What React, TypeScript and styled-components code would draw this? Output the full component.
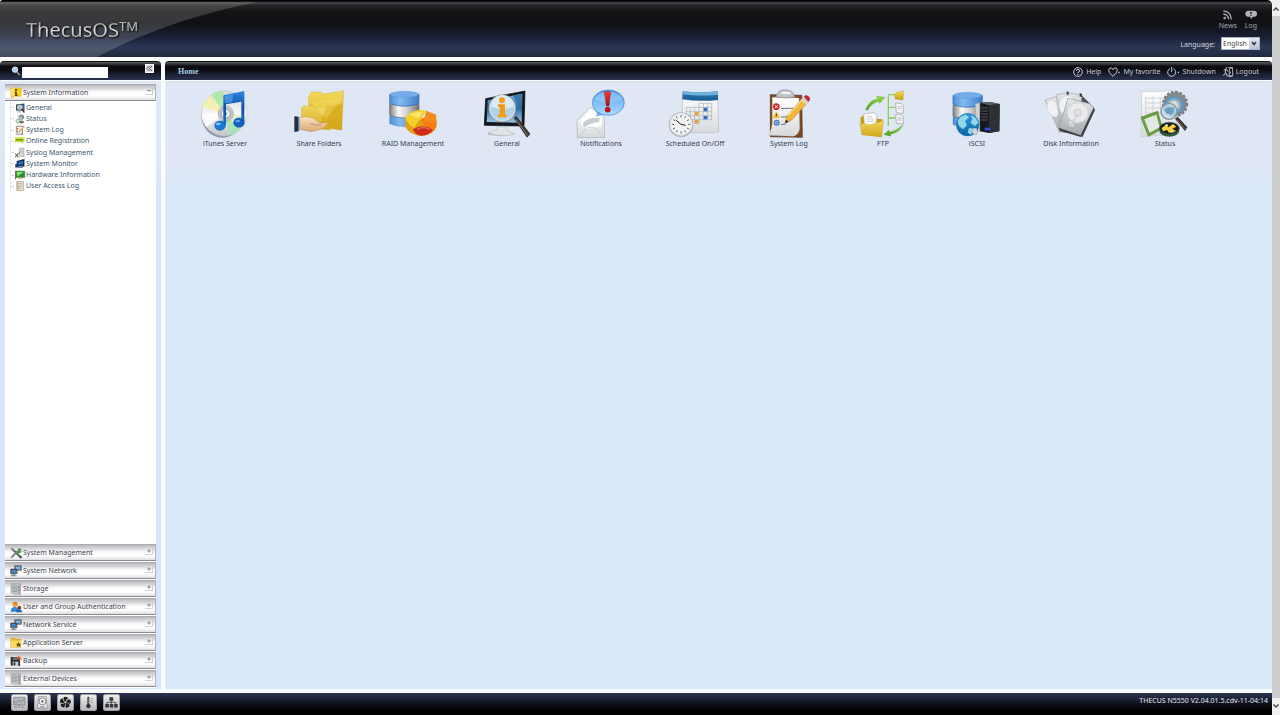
import React from "react";
import styled, { createGlobalStyle } from "styled-components";

const UI_FONT = '"Noto Sans", "Open Sans", sans-serif';

const GlobalStyle = createGlobalStyle`
  *, *::before, *::after { box-sizing: border-box; }
  body {
    margin: 0;
    background: #fbfcfe;
    font-family: ${UI_FONT};
    font-size: 7px;
    line-height: 10px;
    color: #3c4450;
  }
  button, input, select { font: inherit; color: inherit; }
  a { color: inherit; text-decoration: none; }
  ul { list-style: none; margin: 0; padding: 0; }
  h1, h2 { margin: 0; font-weight: normal; font-size: inherit; }
  svg { display: block; overflow: visible; }
`;

/* ---------- page frame ---------- */

const Page = styled.div`
  display: grid;
  grid-template-columns: minmax(0, 1fr) 8px;
  min-height: 100vh;
`;

const Desktop = styled.div`
  display: flex;
  flex-direction: column;
  min-width: 0;
`;

const ScrollTrack = styled.div`
  display: flex;
  flex-direction: column;
  align-items: center;
  justify-content: space-between;
  background: #f0f0f0;
  padding: 7px 0;
`;

const ScrollThumb = styled.div`
  flex: 1;
  align-self: stretch;
  margin: 5px 0 6px;
  background: #cdcdcd;
`;

const Columns = styled.div`
  display: grid;
  grid-template-columns: 161px minmax(0, 1fr);
  gap: 4px;
  flex: 1;
  padding: 4px 0;
`;

const Panel = styled.section`
  display: flex;
  flex-direction: column;
  min-width: 0;
`;

const PanelBar = styled.div`
  display: flex;
  align-items: center;
  height: 19px;
  border-radius: 4px 4px 0 0;
  border-top: 1px solid #111;
  background: linear-gradient(#5c5c60 0, #38383c 2px, #0c0c10 4px, #0b0c12 8px, #1c2236 13px, #2b3350 18px);
  margin-bottom: 1px;
`;

/* ---------- top header ---------- */

const Header = styled.header`
  position: relative;
  display: flex;
  justify-content: space-between;
  height: 57px;
  border-top: 1px solid #000;
  border-radius: 3px 5px 0 0;
  overflow: hidden;
  background: linear-gradient(#060606 0, #4a4a4e 2px, #26272a 4px, #141416 10px, #0f1014 22px, #192034 36px, #2b3754 46px, #232a3e 56px);
`;

const Swoosh = styled.svg`
  position: absolute;
  left: 0;
  top: 0;
`;

const Logo = styled.h1`
  position: relative;
  display: flex;
  align-items: flex-start;
  padding: 14px 0 0 26px;
  font-family: "Noto Sans", "Open Sans", sans-serif;
  font-size: 20px;
  line-height: 30px;
  filter: drop-shadow(1px 1px 1px #000);

  span, sup {
    background: linear-gradient(#8d8d8d 20%, #dedede 50%, #a4a4a4 80%);
    -webkit-background-clip: text;
    background-clip: text;
    color: transparent;
  }
  sup {
    font-size: 13px;
    line-height: 22px;
  }
`;

const HeaderTools = styled.div`
  display: flex;
  flex-direction: column;
  align-items: flex-end;
  padding: 9px 12px 0 0;
`;

const Shortcuts = styled.nav`
  display: flex;
  gap: 8px;
  padding-right: 3px;
`;

const Shortcut = styled.a`
  display: flex;
  flex-direction: column;
  align-items: center;
  gap: 1px;
  color: #a4a5aa;
`;

const LanguageRow = styled.div`
  display: flex;
  align-items: center;
  gap: 6px;
  margin-top: 6px;
  color: #d4d6dc;

  label { padding-top: 2px; }
`;

const SelectBox = styled.div`
  display: grid;
  grid-template-columns: 27px 10px;
  height: 13px;
  border: 1px solid #a9b3c4;
  background: #fff;

  select {
    grid-area: 1 / 1 / 2 / 3;
    appearance: none;
    border: 0;
    padding: 0 0 0 1px;
    background: transparent;
    color: #444;
    line-height: 11px;
  }
  svg {
    grid-area: 1 / 2 / 2 / 3;
    pointer-events: none;
    background: linear-gradient(#e4e9f1, #b7c1d2);
  }
`;

/* ---------- sidebar ---------- */

const SearchBar = styled(PanelBar)`
  padding: 0 7px 0 11px;
  gap: 1px;

  input {
    width: 86px;
    height: 11px;
    margin-top: 3px;
    padding: 0 2px;
    border: 0;
    background: #fff;
  }
`;

const CollapseButton = styled.button`
  display: grid;
  place-items: center;
  width: 9px;
  height: 9px;
  margin: 0 0 5px auto;
  padding: 0;
  border: 1px solid #fff;
  background: #dcdcdc;
`;

const SidebarBody = styled.div`
  display: flex;
  flex: 1;
  flex-direction: column;
  padding: 3px 5px 1px;
  background: linear-gradient(#e0e8f6 0, #dfe7f5 100px, #d6e5fa 110px);
`;

const Accordion = styled.div`
  display: flex;
  flex: 1;
  flex-direction: column;
  background: #fff;
`;

const SectionButton = styled.button`
  display: flex;
  align-items: center;
  flex: none;
  gap: 1px;
  width: 100%;
  height: 17px;
  margin-bottom: 1px;
  padding: 1px 2px 0 5px;
  border: 0;
  border-right: 1px solid #b0b0b4;
  border-bottom: 1px solid #8c8c90;
  background: linear-gradient(#a6a6aa 0, #c3c3c7 2px, #dcdcdf 5px, #fbfbfb 8px, #fff 12px, #dedee2 16px);
  text-align: left;
  white-space: nowrap;
`;

const ToggleMark = styled.span`
  display: grid;
  place-items: center;
  width: 8px;
  height: 7px;
  margin: 0 0 3px auto;
  border-right: 1px solid #cfcfcf;
  border-bottom: 1px solid #d4d4d4;
`;

const Tree = styled.div`
  display: flex;
  flex: 1;
  flex-direction: column;
`;

const TreeList = styled.ul`
  display: flex;
  flex-direction: column;
  justify-content: space-between;
  height: 90px;
  margin-left: 5px;
  border-left: 1px dotted #d4d4d4;
`;

const TreeLink = styled.a`
  display: flex;
  align-items: center;
  gap: 2px;
  height: 11px;
  color: #40566e;

  &::before {
    content: "";
    width: 2px;
    border-top: 1px dotted #d4d4d4;
  }
  svg { margin-right: -1px; }
`;

/* ---------- main area ---------- */

const MainBar = styled(PanelBar)`
  justify-content: space-between;
  padding: 2px 13px 0;
`;

const Title = styled.h2`
  && { font-weight: bold; }
  font-family: "Liberation Serif", serif;
  font-size: 8px;
  color: #a9d3e4;
`;

const Toolbar = styled.nav`
  display: flex;
  gap: 7px;
`;

const ToolButton = styled.button`
  display: flex;
  align-items: center;
  gap: 3px;
  padding: 0;
  border: 0;
  background: none;
  color: #c9ccd4;
`;

const Workspace = styled.main`
  flex: 1;
  padding: 8px 12px;
  border-top: 1px solid #d9dce4;
  border-left: 1px solid #e6edf8;
  border-right: 4px solid #dce8f8;
  background: linear-gradient(#dfe7f5 0, #dfe7f5 88px, #d8e7fa 104px);
`;

const AppGrid = styled.ul`
  display: flex;
  flex-wrap: wrap;
  row-gap: 12px;
`;

const AppLink = styled.a`
  display: flex;
  flex-direction: column;
  align-items: center;
  gap: 1px;
  width: 94px;
  color: #33404f;
  text-align: center;
`;

/* ---------- footer ---------- */

const Footer = styled.footer`
  display: flex;
  align-items: flex-start;
  justify-content: space-between;
  height: 22px;
  padding: 1px 4px 0 11px;
  background: linear-gradient(#2b3450 0, #1c2236 6px, #0a0b12 12px, #000 18px);
  color: #e6e8ee;
`;

const MonitorButtons = styled.div`
  display: flex;
  gap: 6px;
`;

const MonitorButton = styled.button`
  display: grid;
  place-items: center;
  width: 17px;
  height: 17px;
  padding: 0;
  border: 1px solid #a0a0a4;
  border-radius: 2px;
  background: linear-gradient(#efeff0, #b9b9bd);
`;

const Version = styled.span`
  padding-top: 2px;
`;

/* ---------- shared gradients ---------- */

const DefsSvg = styled.svg`
  position: absolute;
`;

function SharedDefs() {
  const lin = (id: string, stops: [string, string][], horizontal = false) => (
    <linearGradient id={id} x1="0" y1="0" x2={horizontal ? "1" : "0"} y2={horizontal ? "0" : "1"}>
      {stops.map(([o, c]) => (
        <stop key={o} offset={o} stopColor={c} />
      ))}
    </linearGradient>
  );
  return (
    <DefsSvg width="0" height="0" aria-hidden="true">
      <defs>
        {lin("gold", [["0", "#f3dc5c"], ["0.5", "#e3bd2d"], ["1", "#c99a14"]])}
        {lin("goldLight", [["0", "#f0d65c"], ["1", "#d4a61e"]])}
        {lin("blueCyl", [["0", "#4f8fd6"], ["0.35", "#84baf2"], ["1", "#3f7cc6"]], true)}
        {lin("steelCyl", [["0", "#7d7d7d"], ["0.3", "#fafafa"], ["0.6", "#cfcfcf"], ["1", "#6f6f6f"]], true)}
        {lin("note", [["0", "#2f86dc"], ["0.5", "#0f4fae"], ["1", "#1b74d4"]])}
        {lin("disc", [["0", "#d2d6d8"], ["0.5", "#f6f6f6"], ["1", "#c2c6c8"]])}
        {lin("screen", [["0", "#7db4e0"], ["0.5", "#2c6ea8"], ["1", "#9cc8e8"]])}
        {lin("bubble", [["0", "#3f8ce8"], ["0.45", "#7cbcf6"], ["1", "#a8dcff"]])}
        {lin("red", [["0", "#f23b30"], ["1", "#b30d12"]])}
        {lin("paper", [["0", "#ffffff"], ["1", "#d6dadd"]])}
        {lin("calHead", [["0", "#2f7cb4"], ["1", "#175a90"]])}
        {lin("globe", [["0", "#2c9ad8"], ["1", "#0b63a8"]])}
        {lin("hand", [["0", "#fbe3c4"], ["1", "#dba877"]])}
        {lin("disk", [["0", "#e6e7e8"], ["1", "#a5a8ab"]])}
        {lin("green", [["0", "#9ad84a"], ["1", "#4a9c16"]])}
      </defs>
    </DefsSvg>
  );
}

/* ---------- large application icons ---------- */

const Cylinder = ({ x, y }: { x: number; y: number }) => (
  <g transform={`translate(${x} ${y})`}>
    <path d="M0 74 V98 Q44 116 88 98 V74Z" fill="url(#blueCyl)" stroke="#3a6fb0" />
    <path d="M0 40 V72 Q44 90 88 72 V40Z" fill="url(#steelCyl)" stroke="#66696c" strokeWidth="2" />
    <path d="M0 10 V37 Q44 55 88 37 V10Z" fill="url(#blueCyl)" stroke="#2f64a8" strokeWidth="2" />
    <ellipse cx="44" cy="10" rx="43" ry="9" fill="#74ace8" stroke="#4f8bd0" />
  </g>
);

const APP_ART: Record<string, { box: string; art: React.ReactNode }> = {
  itunes: {
    box: "64 24 144 144",
    art: (
      <g>
        <ellipse cx="128" cy="101" rx="63" ry="66" fill="#6e7478" opacity="0.7" />
        <circle cx="134" cy="94" r="68" fill="url(#disc)" stroke="#b9bec2" />
        <path d="M134 94 L95 38 A68 68 0 0 1 128 26Z" fill="#a4ec9c" opacity="0.85" />
        <path d="M134 94 L68 76 A68 68 0 0 1 92 41Z" fill="#f7f0a0" opacity="0.75" />
        <path d="M134 94 L182 142 A68 68 0 0 1 150 160Z" fill="#9ce8b0" opacity="0.8" />
        <path d="M134 94 L201 104 A68 68 0 0 1 184 140Z" fill="#d8e8b0" opacity="0.6" />
        <path d="M134 94 L66 96 A68 68 0 0 0 80 136Z" fill="#fff" opacity="0.8" />
        <circle cx="138" cy="95" r="23" fill="#c5c8ca" stroke="#a2a6a8" strokeWidth="2" />
        <circle cx="138" cy="95" r="14" fill="#eef1f2" stroke="#8d9294" strokeWidth="3" />
        <circle cx="138" cy="95" r="5" fill="#9aa" />
        <path d="M131 40 L194 27 V118 H185 V59 L139 67 V130 H131Z" fill="url(#note)" />
        <path d="M134 42 L160 37 L158 60 L136 64Z" fill="#5da6ec" opacity="0.6" />
        <ellipse cx="121" cy="131" rx="16" ry="14" fill="#1d78d8" stroke="#0d4696" strokeWidth="1.5" />
        <ellipse cx="178" cy="122" rx="16" ry="14" fill="#1260c0" stroke="#0d4696" strokeWidth="1.5" />
        <ellipse cx="116" cy="126" rx="7" ry="4" fill="#8cc6fa" />
        <ellipse cx="174" cy="117" rx="7" ry="4" fill="#5fa6ee" />
      </g>
    ),
  },
  share: {
    box: "346 24 144 144",
    art: (
      <g>
        <path d="M386 48 L394 30 H424 L430 37 L492 26 L486 144 L394 132Z" fill="url(#gold)" stroke="#c59a1c" />
        <path d="M365 78 L372 72 H400 L404 78 L440 76 L452 144 L400 138 L366 110Z" fill="url(#goldLight)" stroke="#cda42a" />
        <path d="M440 72 L488 66 L484 144 L420 134Z" fill="#d8ab1e" opacity="0.75" />
        <path d="M392 60 L488 48 L440 110Z" fill="#fbe98a" opacity="0.3" />
        <path d="M357 108 Q378 100 400 108 L420 122 Q434 124 446 120 Q440 134 424 142 Q398 152 380 146 L357 142Z" fill="url(#hand)" stroke="#a8764a" />
        <path d="M392 124 Q408 132 424 128" fill="none" stroke="#a8764a" strokeWidth="2" />
        <path d="M344 103 L357 104 V148 L344 150Z" fill="#22303e" />
        <path d="M357 105 H361 V146 H357Z" fill="#8fb0c8" />
      </g>
    ),
  },
  raid: {
    box: "628 24 144 144",
    art: (
      <g>
        <Cylinder x={630} y={27} />
        <path d="M677 108 V134 Q690 160 728 162 Q766 156 770 132 V108Z" fill="#e2a012" />
        <path d="M700 142 Q728 124 762 142 Q748 162 722 161 Q706 158 700 142Z" fill="#cf2a1c" />
        <path d="M724 112 L752 96 Q776 104 770 134 L762 146 Q742 130 732 130Z" fill="#f47a14" />
        <path d="M677 108 Q688 88 716 84 L740 86 L724 112 Q712 120 704 138 Q684 128 677 108Z" fill="#f5cf2a" />
        <path d="M740 86 L770 98 L768 124 L732 116Z" fill="#f28c1e" />
        <path d="M690 98 Q704 88 730 90 L716 108Z" fill="#fbe46a" />
        <path d="M712 142 Q730 132 752 142" fill="none" stroke="#f08070" strokeWidth="3" />
      </g>
    ),
  },
  general: {
    box: "70 24 144 144",
    art: (
      <g>
        <ellipse cx="124" cy="155" rx="40" ry="7" fill="#b9bec4" />
        <path d="M84 152 L112 144 V134 H142 V146 L166 156 Q120 166 84 152Z" fill="#e2e5e8" stroke="#9da3a8" />
        <path d="M78 50 L196 27 L193 132 L74 130Z" fill="#15181c" stroke="#000" strokeWidth="2" />
        <path d="M84 55 L188 35 L186 122 L81 120Z" fill="url(#screen)" />
        <path d="M160 40 L188 35 L186 90Z" fill="#2a6498" opacity="0.7" />
        <path d="M162 108 L170 101 L212 156 L202 167Z" fill="#3d3632" />
        <path d="M168 112 L204 160" stroke="#8a8078" strokeWidth="3" />
        <circle cx="128" cy="79" r="38" fill="#bcd8ee" fillOpacity="0.92" stroke="#d9dde0" strokeWidth="5" />
        <circle cx="128" cy="79" r="41" fill="none" stroke="#6d7478" strokeWidth="1.5" />
        <path d="M94 74 A34 34 0 0 1 162 74 Q128 88 94 74Z" fill="#e9f4fc" opacity="0.7" />
        <circle cx="127" cy="55" r="9" fill="#f39c12" />
        <path d="M115 67 H136 V98 H141 V106 H114 V98 H120 V75 H115Z" fill="#f39c12" />
      </g>
    ),
  },
  notify: {
    box: "352 24 144 144",
    art: (
      <g>
        <path d="M352 116 L392 76 L434 106 V166 L353 167Z" fill="url(#paper)" stroke="#a9adb0" strokeWidth="2" />
        <path d="M364 112 L394 90 L426 106 L424 132 L384 140 L364 130Z" fill="#fff" />
        <path d="M368 128 Q380 104 420 108 L418 120 Q388 124 376 136Z" fill="#c9ced2" />
        <path d="M353 167 L384 136 H404 L434 166" fill="none" stroke="#bdc1c4" strokeWidth="2" />
        <path d="M404 84 Q418 94 408 104 Q424 102 434 94Z" fill="#6fb0f0" />
        <ellipse cx="446" cy="62" rx="48" ry="38" fill="url(#bubble)" stroke="#4284d0" strokeWidth="2" />
        <path d="M404 52 Q414 30 446 28 Q478 30 488 52 Q446 68 404 52Z" fill="#a9d4fb" opacity="0.55" />
        <path d="M434 30 Q444 26 453 30 L448 72 H440Z" fill="url(#red)" stroke="#8e0a0e" />
        <circle cx="444" cy="83" r="8" fill="#c81418" stroke="#8e0a0e" />
      </g>
    ),
  },
  schedule: {
    box: "634 24 144 144",
    art: (
      <g>
        <path d="M668 34 H774 L777 150 Q730 156 668 148Z" fill="url(#paper)" stroke="#b5babd" strokeWidth="2" />
        <path d="M669 28 Q720 34 775 28 V54 Q720 60 668 52Z" fill="url(#calHead)" />
        <path d="M669 28 Q720 34 775 28 V38 Q720 44 668 37Z" fill="#6fb2dc" />
        <g fill="none" stroke="#a9afb4" strokeWidth="2">
          <path d="M718 64 H756 M680 76 H756 M680 89 H756 M680 101 H756 M690 113 H756 M704 125 H718" />
          <path d="M680 76 V101 M692 76 V113 M705 76 V125 M718 64 V125 M731 64 V113 M744 64 V113 M756 64 V113" />
        </g>
        <path d="M732 77 H743 V88 H732Z M732 102 H743 V112 H732Z" fill="#2a6fc0" />
        <path d="M706 90 H717 V100 H706Z M706 114 H717 V124 H706Z" fill="#f0a030" />
        <circle cx="664" cy="128" r="37" fill="#b0b4b8" />
        <circle cx="664" cy="127" r="33" fill="#f2f3f4" stroke="#dfe2e4" strokeWidth="3" />
        <g stroke="#666" strokeWidth="3">
          <path d="M664 99 V106 M664 148 V155 M636 127 H643 M685 127 H692 M650 103 L653 109 M678 103 L675 109 M650 151 L653 145 M678 151 L675 145 M640 113 L646 116 M688 113 L682 116 M640 141 L646 138 M688 141 L682 138" />
        </g>
        <path d="M648 114 L664 127 L678 130" fill="none" stroke="#222" strokeWidth="3" />
      </g>
    ),
  },
  syslog: {
    box: "76 24 144 144",
    art: (
      <g>
        <path d="M92 38 L186 40 L188 166 L92 164Z" fill="#7c4a22" stroke="#4f2c12" strokeWidth="2" />
        <path d="M98 46 L178 48 L180 140 Q176 160 160 163 L86 160 Q98 140 98 120Z" fill="url(#paper)" stroke="#bcbcbc" />
        <path d="M118 28 Q138 18 158 30 L166 44 Q138 52 108 44Z" fill="#c3c6c9" stroke="#868a8e" strokeWidth="2" />
        <path d="M126 30 H152 V36 H126Z" fill="#f2f3f4" />
        <circle cx="110" cy="74" r="10" fill="#d22a26" />
        <path d="M106 70 L114 78 M114 70 L106 78" stroke="#fff" strokeWidth="3" />
        <path d="M110 89 L120 107 H101Z" fill="#f5c416" stroke="#d09a10" />
        <path d="M110 95 V103" stroke="#222" strokeWidth="2.5" />
        <circle cx="111" cy="122" r="9" fill="#4d7eb8" />
        <circle cx="111" cy="122" r="4" fill="none" stroke="#cfe0f4" strokeWidth="2" />
        <path d="M124 79 H168 M124 105 H146 M124 127 H138" stroke="#70757a" strokeWidth="3" />
        <path d="M190 46 L207 58 L156 114 L136 124 L142 102Z" fill="#f3b53a" stroke="#c07e16" strokeWidth="1.5" />
        <path d="M184 53 L200 66 M146 100 L190 50" stroke="#fbdc90" strokeWidth="4" />
        <path d="M192 44 L199 39 Q213 44 211 54 L206 60Z" fill="#c62839" />
        <path d="M186 51 L192 44 L206 59 L201 66Z" fill="#cfd2d6" />
        <path d="M136 124 L139 113 L147 119Z" fill="#222" />
      </g>
    ),
  },
  ftp: {
    box: "358 24 144 144",
    art: (
      <g>
        <path d="M446 38 V132 M446 38 H466 M446 76 H468 M446 108 H468" fill="none" stroke="#8ccf5a" strokeWidth="4" />
        <path d="M465 36 L472 30 H480 L484 27 H492 L490 54 L466 51Z" fill="url(#gold)" stroke="#b98e16" />
        <path d="M468 63 L486 65 L491 70 V94 L470 92Z M468 97 L486 99 L491 104 V126 L470 124Z" fill="#f2f3f4" stroke="#9b9ea2" strokeWidth="2" />
        <path d="M474 74 H486 M474 80 H486 M474 108 H486 M474 114 H486" stroke="#a4a8ac" strokeWidth="2" />
        <path d="M362 108 L368 102 H384 L388 108 L428 112 L424 164 L366 158Z" fill="#c79a16" />
        <path d="M372 96 L402 92 L412 102 L408 132 L374 130Z" fill="#fbfbfb" stroke="#a9acb0" strokeWidth="2" />
        <path d="M380 104 H398 M380 111 H402 M380 118 H402" stroke="#b0b4b8" strokeWidth="2" />
        <path d="M360 124 L392 128 L432 116 L426 165 L368 158Z" fill="url(#goldLight)" stroke="#c69a1c" />
        <path d="M378 84 Q388 54 414 50 L411 43 L436 46 L420 64 L417 58 Q394 64 384 84Z" fill="url(#green)" stroke="#4e9a1c" />
        <path d="M490 128 Q480 152 452 156 L454 162 L433 158 L447 144 L449 150 Q472 146 490 128Z" fill="url(#green)" stroke="#4e9a1c" />
      </g>
    ),
  },
  iscsi: {
    box: "640 24 144 144",
    art: (
      <g>
        <Cylinder x={640} y={30} />
        <path d="M722 62 L752 60 L780 66 L779 148 L748 153 L720 148Z" fill="#17191c" />
        <path d="M722 62 L752 60 L780 66 L748 70Z" fill="#5d6166" />
        <path d="M748 70 L780 66 L779 148 L748 153Z" fill="#2d3034" />
        <path d="M724 78 H745 M724 87 H745 M724 96 H745 M724 105 H745 M724 114 H745" stroke="#55595e" strokeWidth="3" />
        <path d="M735 137 H752 V145 H735Z" fill="#3848e0" />
        <path d="M707 66 L720 62 V148 L709 150Z" fill="#cfd2d5" stroke="#8e9296" />
        <circle cx="684" cy="128" r="34" fill="url(#globe)" stroke="#0f5c96" />
        <path d="M654 118 Q662 100 678 98 L688 106 L676 118 L682 130 L670 142 L658 132Z M694 100 Q710 106 716 122 L706 132 L692 122 L698 112Z M688 138 L706 140 L694 158 L684 152Z" fill="#9ce0ee" opacity="0.9" />
        <path d="M698 144 Q706 134 712 140 V158 Q702 160 698 152Z" fill="#d3d6d8" stroke="#888" />
      </g>
    ),
  },
  disks: {
    box: "142 24 144 144",
    art: (
      <g>
        <path d="M182 150 L250 158 L284 78 L246 40Z" fill="#4d5154" />
        <path d="M136 54 L168 44 L204 140 L180 152Z" fill="url(#disk)" stroke="#a3a7aa" strokeWidth="2" />
        <ellipse cx="160" cy="80" rx="16" ry="26" transform="rotate(-22 160 80)" fill="#f0f1f2" stroke="#c3c6c8" />
        <path d="M170 38 L204 32 L246 40 L240 130 L184 148Z" fill="url(#disk)" stroke="#a3a7aa" strokeWidth="2" />
        <ellipse cx="204" cy="70" rx="27" ry="30" fill="#f0f1f2" stroke="#c3c6c8" strokeWidth="2" />
        <path d="M205 48 L272 66 L282 78 L244 160 L178 138Z" fill="url(#disk)" stroke="#94989b" strokeWidth="2" />
        <path d="M282 78 L286 84 L248 166 L243 160Z M178 138 L243 160 L246 166 L180 146Z" fill="#3e4144" />
        <ellipse cx="234" cy="92" rx="32" ry="30" fill="#e9eaeb" stroke="#cfd2d4" strokeWidth="3" />
        <circle cx="234" cy="92" r="11" fill="#dfe1e3" stroke="#c0c3c6" strokeWidth="2" />
        <path d="M206 118 Q214 112 224 120 L220 136 Q206 134 206 118Z" fill="#dadcde" stroke="#b4b7ba" />
        <path d="M214 128 L236 96" stroke="#bfc2c4" strokeWidth="3" />
        <path d="M201 28 L207 30 V38 H201Z M240 32 L247 36 V44 H240Z" fill="#3e4144" />
      </g>
    ),
  },
  status: {
    box: "424 24 144 144",
    art: (
      <g>
        <path d="M426 29 L530 27 V156 L424 164Z" fill="url(#paper)" stroke="#c4c8cb" strokeWidth="2" />
        <path d="M438 48 H500 M438 63 H500 M438 78 H500 M438 93 H500 M438 44 V96 M460 44 V96 M482 44 V96" stroke="#c2c6ca" strokeWidth="2" />
        <circle cx="526" cy="66" r="35" fill="#83898e" />
        <circle cx="526" cy="66" r="36" fill="none" stroke="#777d82" strokeWidth="7" strokeDasharray="8 5" />
        <circle cx="523" cy="70" r="23" fill="#a9afb4" stroke="#4ba0e0" strokeWidth="6" />
        <circle cx="523" cy="70" r="13" fill="#d8dcdf" />
        <circle cx="508" cy="88" r="24" fill="#b9d8ee" fillOpacity="0.75" stroke="#8c9398" strokeWidth="4" />
        <path d="M494 86 Q504 70 526 78 L518 96 Q504 100 494 86Z" fill="#5d93bc" opacity="0.8" />
        <path d="M526 110 L534 104 L563 136 L556 147Z" fill="#3c3230" />
        <path d="M532 113 L556 140" stroke="#8d6f66" strokeWidth="3" />
        <path d="M424 106 L474 88 L488 140 L446 163Z" fill="#6fa044" stroke="#4a7a28" strokeWidth="2" />
        <path d="M434 112 L470 98 L480 136 L450 152Z" fill="#e3e8e0" />
        <ellipse cx="509" cy="146" rx="30" ry="18" fill="#2e5a44" />
        <ellipse cx="509" cy="139" rx="30" ry="18" fill="#1d1d1a" stroke="#456b58" strokeWidth="2" />
        <path d="M486 138 L500 128 L506 136 L520 126 L530 134 L518 140 L530 148 L508 152 L502 144 L490 148Z" fill="#f4d23a" />
        <path d="M494 130 L502 126 L506 132 Z M516 146 L524 150 L514 152Z" fill="#fff" />
      </g>
    ),
  },
};

function AppIcon({ name, size = 48 }: { name: string; size?: number }) {
  const { box, art } = APP_ART[name];
  return (
    <svg width={size} height={size} viewBox={box} aria-hidden="true">
      {art}
    </svg>
  );
}

/* ---------- small sidebar icons, on a 36-unit grid ---------- */

const NetworkArt = (
  <g>
    <path d="M14 2 H34 V16 H14Z" fill="#5c6f80" stroke="#39444e" strokeWidth="1.5" />
    <path d="M17 5 H31 V13 H17Z" fill="#7fb4dc" />
    <path d="M2 12 H20 V26 H2Z" fill="#44525e" stroke="#2c353d" strokeWidth="1.5" />
    <path d="M5 15 H17 V23 H5Z" fill="#3f8ad0" />
    <path d="M6 26 H16 V31 H6Z M2 31 H20 V34 H2Z M24 17 V26 H20" fill="#8a959e" />
  </g>
);

const StorageArt = (
  <g>
    <path d="M3 2 H31 V11 H3Z M3 12 H31 V21 H3Z M3 22 H31 V31 H3Z" fill="#d4d6d8" stroke="#85898d" strokeWidth="1.5" />
    <path d="M6 6 H22 M6 16 H22 M6 26 H22" stroke="#8b8f93" strokeWidth="2.5" />
    <path d="M26 4 V34 M30 4 V34" stroke="#777b7f" strokeWidth="1.5" />
    <path d="M12 31 V35 H34" fill="none" stroke="#a0a4a8" strokeWidth="2" />
  </g>
);

const SMALL_ART: Record<string, React.ReactNode> = {
  info: (
    <g>
      <path d="M3 3 H33 V28 H12 L4 34 L5 28 H3Z" fill="#f8cf20" stroke="#d7a30c" strokeWidth="1.5" />
      <path d="M4 4 H14 V27 H4Z" fill="#fbe468" />
      <circle cx="18" cy="9" r="3" fill="#3a2c00" />
      <path d="M14 14 H20 V23 H23 V26 H14 V23 H16 V17 H14Z" fill="#3a2c00" />
    </g>
  ),
  tools: (
    <g>
      <path d="M5 4 L31 30" stroke="#5c6266" strokeWidth="6" />
      <path d="M4 32 L22 13" stroke="#7b8185" strokeWidth="6" />
      <path d="M22 14 L30 3 L34 8Z" fill="#4d5357" />
      <path d="M20 15 L26 4 L30 6 L27 10 L31 13 L34 9 L35 15 L27 20Z" fill="#4aa04c" />
      <path d="M2 6 L8 1 L12 8 L6 12Z" fill="#8e9498" />
      <path d="M28 30 L33 25 L36 31 L32 35Z" fill="#3e4448" />
    </g>
  ),
  network: NetworkArt,
  storage: StorageArt,
  users: (
    <g>
      <circle cx="15" cy="10" r="8" fill="#f2a43c" />
      <path d="M10 6 Q16 0 22 7 L23 14 Q20 8 10 9Z" fill="#e07a18" />
      <path d="M2 32 Q2 18 14 18 Q26 18 27 32Z" fill="#2f86dc" />
      <circle cx="28" cy="20" r="6" fill="#6b4a30" />
      <path d="M18 34 Q20 25 28 25 Q36 26 37 34Z" fill="#1d62b4" />
    </g>
  ),
  appserver: (
    <g>
      <path d="M2 6 L6 3 H15 L18 6 H32 V31 H2Z" fill="#e6b828" stroke="#c2941a" />
      <path d="M2 11 H34 L31 31 H2Z" fill="#f9db60" />
      <path d="M26 14 L28 20 L35 20 L30 24 L32 31 L26 27 L20 31 L22 24 L17 20 H24Z" fill="#6b4a12" />
    </g>
  ),
  backup: (
    <g>
      <path d="M2 6 H30 V33 H6 L2 29Z" fill="#2c2f33" />
      <path d="M8 20 H25 V33 H8Z" fill="#c9ccd0" />
      <path d="M11 22 H16 V31 H11Z" fill="#2c2f33" />
      <path d="M8 7 H23 V15 H8Z" fill="#6c7176" />
      <path d="M20 8 L28 1 V5 Q36 6 34 18 Q32 11 28 11 V15Z" fill="#e8602c" />
    </g>
  ),
  general: (
    <g>
      <path d="M4 5 L34 2 V28 L4 27Z" fill="#1f3550" />
      <path d="M7 8 L31 5 V24 L7 24Z" fill="#3f80bc" />
      <circle cx="17" cy="15" r="9" fill="#cfe2f2" stroke="#8d9ba8" strokeWidth="2" />
      <path d="M17 9 V21" stroke="#f09a18" strokeWidth="5" />
      <path d="M24 22 L34 34" stroke="#3d3632" strokeWidth="5" />
      <path d="M6 30 H22 V34 H6Z" fill="#b4bac0" />
    </g>
  ),
  status: (
    <g>
      <path d="M8 3 H26 V32 H8Z" fill="#e4e7e9" />
      <circle cx="24" cy="11" r="9" fill="#858b90" />
      <circle cx="22" cy="14" r="6" fill="#c2d4e2" stroke="#6a7076" strokeWidth="2" />
      <path d="M3 22 L14 18 L18 30 L8 34Z" fill="#dde3d8" stroke="#6f8c5c" strokeWidth="2" />
      <ellipse cx="24" cy="29" rx="8" ry="5" fill="#4c5046" />
      <path d="M20 29 H28" stroke="#d8c060" strokeWidth="3" />
    </g>
  ),
  registration: (
    <g>
      <path d="M0 4 H34 V22 H0Z" fill="#b4d82c" />
      <path d="M0 4 H34 V11 H0Z" fill="#d4ec54" />
      <path d="M5 13 H29" stroke="#4c6410" strokeWidth="4" strokeDasharray="3 1.5" />
      <path d="M22 22 H30 L28 30Z" fill="#c9ced0" />
    </g>
  ),
  scroll: (
    <g>
      <path d="M8 1 Q18 5 30 1 V33 Q20 36 8 34Z" fill="#efe6d6" stroke="#8a7c68" strokeWidth="2" />
      <path d="M13 9 H25 M13 15 H25 M13 21 H25 M13 27 H22" stroke="#a4947c" strokeWidth="2" />
      <path d="M5 1 H12 V34 H5Z" fill="#b7a58a" opacity="0.7" />
    </g>
  ),
  syslogm: (
    <g>
      <path d="M16 1 H32 V30 H16Z" fill="#e6e2dc" stroke="#8c8880" strokeWidth="2" />
      <path d="M20 9 H29 M20 14 H29 M20 19 H29" stroke="#a8a298" strokeWidth="2" />
      <path d="M1 20 L12 33 M12 20 L1 33" stroke="#5f7a68" strokeWidth="4" />
      <path d="M8 22 L20 14" stroke="#7c8c84" strokeWidth="3" />
    </g>
  ),
  monitor: (
    <g>
      <path d="M6 7 L34 0 V28 L6 25Z" fill="#0e2c58" />
      <path d="M10 11 L29 7 V20 L10 20Z" fill="#2a70c0" />
      <path d="M1 18 L14 16 V31 H1Z" fill="#1a3c6c" />
      <path d="M16 27 H28 V32 H12Z" fill="#707b86" />
    </g>
  ),
  hardware: (
    <g>
      <path d="M3 4 H35 V27 H3Z" fill="#2f8f34" stroke="#1d5c22" strokeWidth="1.5" />
      <path d="M6 7 H31 L8 23Z" fill="#8ce06c" />
      <path d="M0 3 H4 V33 H0Z" fill="#6c7074" />
      <path d="M10 27 H28 V31 H10Z" fill="#d0a62a" />
    </g>
  ),
};

function SmallIcon({ name, size }: { name: string; size: number }) {
  if (!SMALL_ART[name]) return <AppIcon name={name} size={size} />;
  return (
    <svg width={size} height={size} viewBox="0 0 36 36" aria-hidden="true">
      {SMALL_ART[name]}
    </svg>
  );
}

/* ---------- data ---------- */

const TREE = [
  ["general", "General"],
  ["status", "Status"],
  ["syslog", "System Log"],
  ["registration", "Online Registration"],
  ["syslogm", "Syslog Management"],
  ["monitor", "System Monitor"],
  ["hardware", "Hardware Information"],
  ["scroll", "User Access Log"],
];

const SECTIONS = [
  ["tools", "System Management"],
  ["network", "System Network"],
  ["storage", "Storage"],
  ["users", "User and Group Authentication"],
  ["network", "Network Service"],
  ["appserver", "Application Server"],
  ["backup", "Backup"],
  ["storage", "External Devices"],
];

const APPS = [
  ["itunes", "iTunes Server"],
  ["share", "Share Folders"],
  ["raid", "RAID Management"],
  ["general", "General"],
  ["notify", "Notifications"],
  ["schedule", "Scheduled On/Off"],
  ["syslog", "System Log"],
  ["ftp", "FTP"],
  ["iscsi", "iSCSI"],
  ["disks", "Disk Information"],
  ["status", "Status"],
];

const TOOLS: [string, React.ReactNode][] = [
  [
    "Help",
    <svg key="i" width="10" height="10" viewBox="0 0 30 30" fill="none" stroke="#c9ccd4" strokeWidth="3">
      <circle cx="15" cy="15" r="13" />
      <path d="M10 12 Q10 7 15 7 Q20 7 20 12 Q20 15 15 16 V19 M15 21 V24" />
    </svg>,
  ],
  [
    "My favorite",
    <svg key="i" width="12" height="10" viewBox="0 0 36 30" fill="none" stroke="#c9ccd4" strokeWidth="3">
      <path d="M15 28 Q0 16 2 9 Q4 2 10 3 Q14 4 15 8 Q16 4 21 3 Q27 2 28 9 Q29 16 15 28Z" />
      <path d="M33 14 V19" strokeWidth="4" />
    </svg>,
  ],
  [
    "Shutdown",
    <svg key="i" width="12" height="10" viewBox="0 0 36 30" fill="none" stroke="#c9ccd4" strokeWidth="3">
      <path d="M9 5 A12 12 0 1 0 19 5 M14 0 V15" />
      <path d="M34 14 V19" strokeWidth="4" />
    </svg>,
  ],
  [
    "Logout",
    <svg key="i" width="10" height="10" viewBox="0 0 30 30" fill="none" stroke="#c9ccd4" strokeWidth="2.5">
      <path d="M14 2 H29 V27 H14 M19 6 L28 2 M19 6 V29 L28 27" />
      <path d="M2 10 L8 7 L12 10 L16 13 M8 8 L7 17 L12 21 V28 M7 17 L5 23 L0 25" strokeWidth="3" />
      <circle cx="10" cy="3" r="2.5" fill="#c9ccd4" stroke="none" />
      <path d="M22 14 V19" />
    </svg>,
  ],
];

const MONITORS: [string, React.ReactNode][] = [
  [
    "System status",
    <g key="g">
      <path d="M2 4 H38 V28 H2Z" fill="#b4b6b8" stroke="#6d7073" strokeWidth="2" />
      <path d="M4 20 H12 L18 14 L24 18 L36 10" fill="none" stroke="#6d7073" strokeWidth="2" />
      <path d="M20 27 V36 M4 35 H14 M26 35 H36" stroke="#7d8083" strokeWidth="3" />
    </g>,
  ],
  [
    "Disk",
    <g key="g">
      <path d="M8 2 H32 L35 34 V38 H5 V34Z" fill="#f0f0f0" stroke="#77797c" strokeWidth="2" />
      <circle cx="20" cy="17" r="11" fill="none" stroke="#6d7073" strokeWidth="2.5" />
      <circle cx="20" cy="17" r="3.5" fill="#505356" />
      <path d="M12 34 H28" stroke="#808386" strokeWidth="3" />
    </g>,
  ],
  [
    "Fan",
    <g key="g">
      <circle cx="20" cy="20" r="18" fill="#3c3e41" opacity="0.25" />
      {[0, 72, 144, 216, 288].map((a) => (
        <path key={a} transform={`rotate(${a} 20 20)`} d="M20 18 Q12 12 16 3 Q28 1 28 9 Q22 10 20 18Z" fill="#1d1f21" />
      ))}
      <circle cx="20" cy="20" r="4" fill="#eee" stroke="#1d1f21" strokeWidth="2" />
    </g>,
  ],
  [
    "Temperature",
    <g key="g">
      <path d="M17 4 Q20 0 23 4 V25 Q28 28 27 33 Q24 39 20 39 Q15 38 13 33 Q13 28 17 25Z" fill="#2e3033" />
      <path d="M28 8 H34 M28 14 H32 M28 20 H34" stroke="#6d7073" strokeWidth="2" />
      <path d="M20 8 V24" stroke="#999" strokeWidth="2" />
    </g>,
  ],
  [
    "Network",
    <g key="g">
      <path d="M14 4 H26 V15 H14Z M1 25 H12 V36 H1Z M15 25 H26 V36 H15Z M29 25 H40 V36 H29Z" fill="#333538" />
      <path d="M20 15 V25 M6 25 V20 H34 V25" fill="none" stroke="#333538" strokeWidth="2.5" />
    </g>,
  ],
];

const Chevron = ({ up = false }: { up?: boolean }) => (
  <svg width="6" height="4" viewBox="0 0 12 8" fill="none" stroke="#4a4a4a" strokeWidth="3" aria-hidden="true">
    <path d={up ? "M1 7 L6 2 L11 7" : "M1 1 L6 6 L11 1"} />
  </svg>
);

const Toggle = ({ open = false }: { open?: boolean }) => (
  <ToggleMark>
    <svg width="4" height="4" viewBox="0 0 12 12" stroke="#8b8d90" strokeWidth="3" aria-hidden="true">
      <path d={open ? "M0 5 H12" : "M1 6 H11 M6 1 V11"} />
    </svg>
  </ToggleMark>
);

export default function App() {
  return (
    <>
      <GlobalStyle />
      <SharedDefs />
      <Page>
        <Desktop>
          <Header>
            <Swoosh width="257" height="56" viewBox="0 0 257 56" aria-hidden="true">
              <path d="M0 1 H257 C205 11 145 30 97 56 H0Z" fill="#fff" fillOpacity="0.17" />
            </Swoosh>
            <Logo>
              <span>ThecusOS</span>
              <sup>TM</sup>
            </Logo>
            <HeaderTools>
              <Shortcuts aria-label="Shortcuts">
                <Shortcut href="#news">
                  <svg width="12" height="10" viewBox="0 0 36 30" fill="none" stroke="#a4a5aa" strokeWidth="4">
                    <path d="M4 3 Q26 4 28 28 M4 12 Q18 13 20 28" />
                    <circle cx="8" cy="24" r="4" fill="#a4a5aa" stroke="none" />
                  </svg>
                  News
                </Shortcut>
                <Shortcut href="#log">
                  <svg width="12" height="10" viewBox="0 0 36 30">
                    <path d="M10 2 H28 Q36 3 36 11 Q36 19 28 20 H23 L19 28 L16 20 H9 Q1 19 1 11 Q1 3 10 2Z" fill="#b4b5ba" />
                    <path d="M18 5 V12 M18 14 V17" stroke="#15161a" strokeWidth="4" />
                  </svg>
                  Log
                </Shortcut>
              </Shortcuts>
              <LanguageRow>
                <label htmlFor="language">Language:</label>
                <SelectBox>
                  <select id="language" defaultValue="English">
                    <option>English</option>
                  </select>
                  <svg width="10" height="11" viewBox="0 0 20 22" fill="none" stroke="#333" strokeWidth="3">
                    <path d="M6 8 L10 13 L14 8" />
                  </svg>
                </SelectBox>
              </LanguageRow>
            </HeaderTools>
          </Header>

          <Columns>
            <Panel>
              <SearchBar>
                <svg width="10" height="11" viewBox="0 0 30 33" aria-hidden="true">
                  <path d="M18 18 L26 27" stroke="#8d949c" strokeWidth="5" />
                  <circle cx="12" cy="11" r="8" fill="#a9d0f4" stroke="#e4ecf6" strokeWidth="3" />
                </svg>
                <input type="text" aria-label="Search" />
                <CollapseButton aria-label="Collapse menu">
                  <svg width="7" height="7" viewBox="0 0 14 14" fill="none" stroke="#4c4c50" strokeWidth="2">
                    <path d="M7 2 L2 7 L7 12 M12 2 L7 7 L12 12" />
                  </svg>
                </CollapseButton>
              </SearchBar>
              <SidebarBody>
                <Accordion>
                  <SectionButton aria-expanded="true">
                    <SmallIcon name="info" size={12} />
                    System Information
                    <Toggle open />
                  </SectionButton>
                  <Tree>
                    <TreeList>
                      {TREE.map(([icon, label]) => (
                        <li key={label}>
                          <TreeLink href="#tree">
                            <SmallIcon name={icon} size={10} />
                            {label}
                          </TreeLink>
                        </li>
                      ))}
                    </TreeList>
                  </Tree>
                  {SECTIONS.map(([icon, label]) => (
                    <SectionButton key={label} aria-expanded="false">
                      <SmallIcon name={icon} size={12} />
                      {label}
                      <Toggle />
                    </SectionButton>
                  ))}
                </Accordion>
              </SidebarBody>
            </Panel>

            <Panel>
              <MainBar>
                <Title>Home</Title>
                <Toolbar aria-label="Session">
                  {TOOLS.map(([label, icon]) => (
                    <ToolButton key={label}>
                      {icon}
                      {label}
                    </ToolButton>
                  ))}
                </Toolbar>
              </MainBar>
              <Workspace>
                <AppGrid>
                  {APPS.map(([icon, label]) => (
                    <li key={label}>
                      <AppLink href="#app">
                        <AppIcon name={icon} />
                        {label}
                      </AppLink>
                    </li>
                  ))}
                </AppGrid>
              </Workspace>
            </Panel>
          </Columns>

          <Footer>
            <MonitorButtons>
              {MONITORS.map(([label, art]) => (
                <MonitorButton key={label} aria-label={label}>
                  <svg width="13" height="13" viewBox="0 0 41 41">
                    {art}
                  </svg>
                </MonitorButton>
              ))}
            </MonitorButtons>
            <Version>THECUS N5550 V2.04.01.5.cdv-11-04:14</Version>
          </Footer>
        </Desktop>
        <ScrollTrack>
          <Chevron up />
          <ScrollThumb />
          <Chevron />
        </ScrollTrack>
      </Page>
    </>
  );
}
